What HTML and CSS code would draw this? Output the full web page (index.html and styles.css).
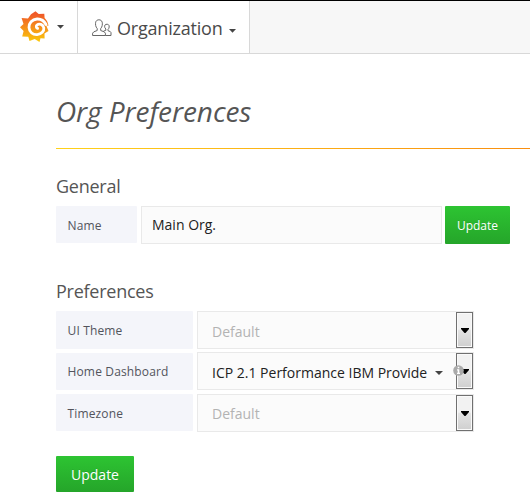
FILE: index.html
```html
<!DOCTYPE html>
<html lang="en">
<head>
<meta charset="utf-8">
<title>Org Preferences</title>
<link rel="stylesheet" href="styles.css">
</head>
<body>
<header class="navbar">
  <div class="brand">
    <svg class="logo" width="30" height="32" viewBox="0 0 30 32">
      <defs><linearGradient id="flame" x1="0" y1="0" x2="0" y2="1"><stop offset="0.1" stop-color="#f05a28"/><stop offset="1" stop-color="#fbca0a"/></linearGradient></defs>
      <path fill="url(#flame)" d="M11 3.2L15.5 0.3L18.7 3.1L24.3 2.8L24.6 7Q28 10 28.4 15L26 14L28.5 20L24.5 22.5L24.6 27.5L20.5 27.2L19.5 31L14.7 28L9.5 30L8.3 25.8L2.2 25.5L3.6 20L0 16.2L3.5 13L1.6 7L8 7.5Z"/>
      <path class="swirl" d="M26 13.5C23.8 9.2 20.5 7.8 17 8C12 8.4 8.8 12.2 9 16.5C9.3 21.2 13 24 17.2 23.6C21.6 23.2 24.2 20.2 23.8 16.9C23.2 13.2 19.2 12.1 17 14C15.8 15.2 16.2 16.8 17.6 17.4"/>
    </svg>
    <svg class="caret" width="7" height="4" viewBox="0 0 7 4"><path d="M0 0H7L3.5 3.7Z"/></svg>
  </div>
  <div class="section">
    <svg class="users" width="20" height="18" viewBox="0 0 20 18">
      <path d="M.6 16.5V14.2Q.8 12.8 5.2 11.5V9.5C3.5 8 3.3 5 3.7 3.2C4.2.1 9.5-.1 10.2 3.2C10.6 5.2 10.3 8 8.7 9.5V11.5Q13.3 12.8 13.4 14.2V16.5Z"/>
      <path d="M11.5 12.2L13.8 11.3V10C12.1 8.3 12.3 5.9 13.8 5.4C16 4.8 17.4 5.9 17.2 8C17 9.2 16.7 9.8 16 10.4V11.7Q19 12.5 19 13.6V16.5H13.4"/>
    </svg>
    <span class="section-title">Organization</span>
    <svg class="caret" width="7" height="4" viewBox="0 0 7 4"><path d="M0 0H7L3.5 3.7Z"/></svg>
  </div>
</header>
<main class="page">
  <h1 class="title">Org Preferences</h1>
  <h3 class="heading">General</h3>
  <div class="general">
    <label class="label">Name</label>
    <div class="field name-field">Main Org.</div>
    <button class="btn btn-small">Update</button>
  </div>
  <h3 class="heading heading-prefs">Preferences</h3>
  <div class="prefs">
    <label class="label tall">UI Theme</label>
    <div class="field select muted"><span class="value">Default</span><span class="drop"><svg width="8" height="5" viewBox="0 0 8 5"><path d="M0 0H8V1L4.5 5H3.5L0 1Z"/></svg></span></div>
    <label class="label low">Home Dashboard</label>
    <div class="field select"><span class="value">ICP 2.1 Performance IBM Provide</span><svg class="caret inner" width="8" height="4" viewBox="0 0 8 4"><path d="M0 0H8L4 4Z"/></svg><span class="drop"><svg width="8" height="5" viewBox="0 0 8 5"><path d="M0 0H8V1L4.5 5H3.5L0 1Z"/></svg></span>
      <svg class="info" width="11" height="11" viewBox="0 0 11 11"><circle cx="5.5" cy="5.5" r="5.3"/><path d="M4.7 1.8H6.3V3.3H4.7ZM4 4.3H6.3V7.7H7V8.9H4V7.7H4.7V5.5H4Z"/></svg></div>
    <label class="label">Timezone</label>
    <div class="field select muted last"><span class="value">Default</span><span class="drop"><svg width="8" height="5" viewBox="0 0 8 5"><path d="M0 0H8V1L4.5 5H3.5L0 1Z"/></svg></span></div>
  </div>
  <button class="btn btn-large">Update</button>
</main>
</body>
</html>
```

FILE: styles.css
```css
* { box-sizing: border-box; }
body { margin: 0; background: #fff; color: #52545c; font-family: "Open Sans", "Noto Sans", sans-serif; font-size: 14px; height: 500px; overflow: hidden; }
.navbar { display: flex; height: 54px; border-top: 1px solid #000; border-bottom: 1px solid #d8d8d8; background: #f7f7f7; }
.brand, .section { display: flex; align-items: center; background: #fff; border-right: 1px solid #d8d8d8; }
.brand { width: 78px; padding-left: 20px; }
.logo { margin-right: 7px; }
.swirl { fill: none; stroke: #fff; stroke-width: 2.8; stroke-linecap: round; }
.caret { fill: #444; }
.section { width: 172px; padding: 1px 0 0 14px; }
.users { fill: none; stroke: #666; stroke-width: 1; margin-right: 5px; }
.section-title { font-size: 18px; line-height: 24px; width: 105px; margin-right: 7px; letter-spacing: -0.2px; white-space: nowrap; color: #4a4a4a; }
.section .caret { margin-top: 6px; }
.page { padding: 38px 0 0 56px; }
.title { margin: 0; height: 57px; font-size: 28px; line-height: 38px; letter-spacing: -0.07px; font-weight: 400; font-style: italic; color: #555; border-bottom: 1px solid; border-image: linear-gradient(90deg, #ffd21a, #f98e10) 1; }
.heading { margin: 25px 0 7px; font-size: 18px; line-height: 25px; letter-spacing: -0.25px; font-weight: 400; color: #555; }
.general { display: flex; height: 38px; }
.label { height: 37px; padding-left: 11.5px; border-radius: 1px; background: #f4f5fa; font-size: 12px; line-height: 40px; letter-spacing: 0.15px; }
.general .label { width: 81px; margin-right: 4px; }
.field { border: 1px solid #e9e9e9; background: #fbfbfb; height: 38px; color: #222; font-size: 14px; line-height: 36px; white-space: nowrap; }
.name-field { width: 301px; margin-right: 3px; padding-left: 10px; }
.btn { border: 0; border-radius: 1px; padding: 0; background: linear-gradient(#2dc432, #25a52a); color: #fff; font-family: inherit; text-shadow: 0 -1px 0 rgba(0,0,0,.1); }
.btn-small { width: 65px; height: 38px; font-size: 12px; }
.heading-prefs { margin-top: 35px; }
.prefs { display: grid; grid-template-columns: 137px 277px; column-gap: 4px; grid-template-rows: 41px 42px 38px; }
.tall { height: 38px; }
.low { margin-top: 1px; line-height: 38px; }
.select { position: relative; display: flex; align-items: center; padding-left: 14px; }
.value { padding-top: 4px; line-height: 30px; }
.last .value { padding-top: 2px; }
.muted .value { color: #b3b3b3; }
.drop { position: absolute; right: 0; top: 0; width: 17px; height: 36px; display: flex; align-items: center; justify-content: center; border: 1px solid #707070; box-shadow: inset 0 0 0 1px #fafafa; background: linear-gradient(#f2f2f2 0 48%, #e4e4e4 50%, #cfcfcf); }
.inner { margin: 4px 0 0 8px; }
.info { position: absolute; left: 255px; top: 12px; }
.info circle { fill: #aaa; }
.info path { fill: #fff; }
.btn-large { display: block; width: 78px; height: 36px; margin-top: 24px; font-size: 14px; }
```
